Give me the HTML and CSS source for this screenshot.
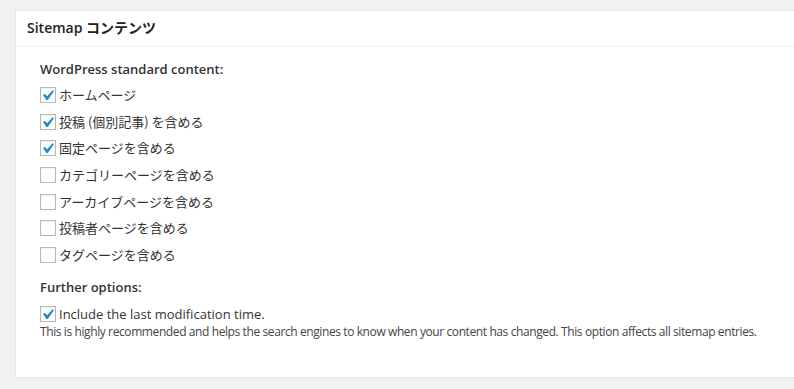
FILE: index.html
```html
<!DOCTYPE html>
<html lang="ja">
<head>
<meta charset="utf-8">
<title>Sitemap コンテンツ</title>
<link rel="stylesheet" href="styles.css">
</head>
<body>
<div class="postbox">
  <h3 class="hndle">Sitemap コンテンツ</h3>
  <div class="inside">
    <p class="group-title">WordPress standard content:</p>
    <ul class="opts std">
      <li><span class="cb"><svg viewBox="0 0 20 20"><path d="M14.83 4.89l1.34.94-5.81 8.38H9.02L5.78 9.67l1.34-1.25 2.57 2.4z"/></svg></span><span class="lbl">ホームページ</span></li>
      <li><span class="cb"><svg viewBox="0 0 20 20"><path d="M14.83 4.89l1.34.94-5.81 8.38H9.02L5.78 9.67l1.34-1.25 2.57 2.4z"/></svg></span><span class="lbl">投稿 (個別記事) を含める</span></li>
      <li><span class="cb"><svg viewBox="0 0 20 20"><path d="M14.83 4.89l1.34.94-5.81 8.38H9.02L5.78 9.67l1.34-1.25 2.57 2.4z"/></svg></span><span class="lbl">固定ページを含める</span></li>
      <li><span class="cb"></span><span class="lbl">カテゴリーページを含める</span></li>
      <li><span class="cb"></span><span class="lbl">アーカイブページを含める</span></li>
      <li><span class="cb"></span><span class="lbl">投稿者ページを含める</span></li>
      <li><span class="cb"></span><span class="lbl">タグページを含める</span></li>
    </ul>
    <p class="group-title further">Further options:</p>
    <ul class="opts extra">
      <li><span class="cb"><svg viewBox="0 0 20 20"><path d="M14.83 4.89l1.34.94-5.81 8.38H9.02L5.78 9.67l1.34-1.25 2.57 2.4z"/></svg></span><span class="lbl en">Include the last modification time.</span></li>
    </ul>
    <p class="desc">This is highly recommended and helps the search engines to know when your content has changed. This option affects all sitemap entries.</p>
  </div>
</div>
</body>
</html>
```
FILE: styles.css
```css
html, body {
  margin: 0;
  padding: 0;
  background: #f1f1f1;
}
body {
  font-family: "Open Sans", "Noto Sans CJK JP", sans-serif;
  color: #444;
  font-size: 13px;
  padding: 10px 0 0 15px;
}
.postbox {
  background: #fff;
  border: 1px solid #e5e5e5;
  border-right: none;
  box-shadow: 0 1px 1px rgba(0,0,0,0.04);
  height: 368px;
  box-sizing: border-box;
}
.hndle {
  margin: 0;
  font-size: 14px;
  font-weight: 600;
  color: #222;
  line-height: 20px;
  padding: 7px 11px 8px;
  border-bottom: 1px solid #eee;
}
.inside {
  padding: 13px 24px 0;
}
.group-title {
  margin: 0;
  font-weight: 600;
  font-size: 13px;
  line-height: 18px;
  color: #333;
}
.opts {
  list-style: none;
  margin: 0;
  padding: 0;
  display: flex;
  flex-direction: column;
}
.opts li {
  display: flex;
  align-items: center;
}
.std {
  margin-top: 4px;
}
.std li {
  height: 26.6px;
}
.extra {
  margin-top: 9px;
}
.extra li {
  height: 18px;
}
.cb {
  width: 16px;
  height: 16px;
  box-sizing: border-box;
  border: 1px solid #b4b9be;
  background: #fff;
  box-shadow: inset 0 1px 2px rgba(0,0,0,0.07);
  margin-right: 3px;
  flex: none;
  overflow: visible;
}
.cb svg {
  display: block;
  width: 21px;
  height: 21px;
  margin: -3px 0 0 -4px;
  fill: #1e8cbe;
}
.lbl {
  font-size: 13px;
  color: #333;
  font-family: "Noto Sans CJK JP", sans-serif;
  line-height: 18px;
}
.lbl.en {
  font-family: "Open Sans", sans-serif;
  font-size: 13px;
}
.further {
  margin-top: 10px;
}
.desc {
  margin: 2px 0 0;
  font-size: 12px;
  letter-spacing: -0.4px;
  line-height: 14px;
  color: #444;
}
```
